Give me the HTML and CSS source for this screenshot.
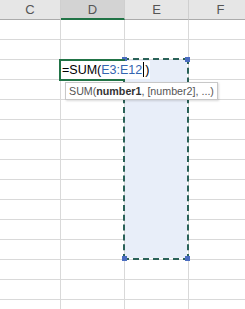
FILE: index.html
```html
<html>

<head>
    <link rel="stylesheet" href="styles.css">
</head>

<body>
<div class="sheet">
    <div class="head">C</div>
    <div class="head head-active">D</div>
    <div class="head">E</div>
    <div class="head">F</div>

    <div class="cell"></div><div class="cell"></div><div class="cell"></div><div class="cell"></div>
    <div class="cell"></div><div class="cell"></div><div class="cell"></div><div class="cell"></div>
    <div class="cell"></div><div class="cell"></div><div class="cell"></div><div class="cell"></div>
    <div class="cell"></div><div class="cell"></div><div class="cell"></div><div class="cell"></div>
    <div class="cell"></div><div class="cell"></div><div class="cell"></div><div class="cell"></div>
    <div class="cell"></div><div class="cell"></div><div class="cell"></div><div class="cell"></div>
    <div class="cell"></div><div class="cell"></div><div class="cell"></div><div class="cell"></div>
    <div class="cell"></div><div class="cell"></div><div class="cell"></div><div class="cell"></div>
    <div class="cell"></div><div class="cell"></div><div class="cell"></div><div class="cell"></div>
    <div class="cell"></div><div class="cell"></div><div class="cell"></div><div class="cell"></div>
    <div class="cell"></div><div class="cell"></div><div class="cell"></div><div class="cell"></div>
    <div class="cell"></div><div class="cell"></div><div class="cell"></div><div class="cell"></div>
    <div class="cell"></div><div class="cell"></div><div class="cell"></div><div class="cell"></div>
    <div class="cell"></div><div class="cell"></div><div class="cell"></div><div class="cell"></div>
    <div class="cell"></div><div class="cell"></div><div class="cell"></div><div class="cell"></div>

    <!-- referenced range E3:E12 -->
    <div class="range">
        <span class="handle h-tl"></span>
        <span class="handle h-tr"></span>
        <span class="handle h-bl"></span>
        <span class="handle h-br"></span>
    </div>

    <!-- active cell D3 being edited -->
    <div class="active">
        <span class="edit">=SUM(<span class="ref">E3:E12</span><span class="caret"></span>)</span>
    </div>

    <div class="tip">SUM(<b>number1</b>, [number2], ...)</div>
</div>
</body>

</html>
```

FILE: styles.css
```css
body {
    margin: 0;
    overflow: hidden;
    background: #fff;
    font-family: "Liberation Sans", Arial, sans-serif;
}

.sheet {
    position: relative;
    display: grid;
    grid-template-columns: 61px 64px 64px 64px;
    grid-auto-rows: 20px;
    width: 253px;
}

.head {
    box-sizing: border-box;
    background: #e6e6e6;
    border-right: 1px solid #cfcfcf;
    border-bottom: 1px solid #ababab;
    color: #555;
    font-size: 13px;
    text-align: center;
    line-height: 19px;
}

.head-active {
    background: #d3d3d3;
    border-bottom: 2px solid #217346;
}

.cell {
    box-sizing: border-box;
    border-right: 1px solid #d9d9d9;
    border-bottom: 1px solid #d9d9d9;
}

.range {
    position: absolute;
    left: 123px;
    top: 58px;
    width: 66px;
    height: 202px;
    box-sizing: border-box;
    border: 2px dashed #2a6158;
    background: #e8eef9;
    background-clip: padding-box;
}

.handle {
    position: absolute;
    width: 5px;
    height: 5px;
    background: #4a6cc0;
}

.h-tl { left: -3px; top: -3px; }
.h-tr { right: -3px; top: -3px; }
.h-bl { left: -3px; bottom: -3px; }
.h-br { right: -3px; bottom: -3px; }

.active {
    position: absolute;
    left: 59px;
    top: 59px;
    width: 66px;
    height: 22px;
    box-sizing: border-box;
    border: 2px solid #217346;
    white-space: nowrap;
}

.edit {
    display: inline-block;
    height: 18px;
    padding: 0 1px 0 1px;
    background: #fff;
    font-size: 12.5px;
    line-height: 18px;
    color: #000;
}

.ref {
    color: #3465b0;
}

.caret {
    display: inline-block;
    width: 1px;
    height: 15px;
    background: #000;
    vertical-align: -3px;
    margin: 0 1px;
}

.tip {
    position: absolute;
    left: 65px;
    top: 82px;
    height: 18px;
    box-sizing: border-box;
    padding: 0 3px;
    background: #fff;
    border: 1px solid #c8c8c8;
    box-shadow: 1px 1px 2px rgba(0, 0, 0, 0.15);
    color: #555;
    font-size: 10.7px;
    line-height: 16px;
    white-space: nowrap;
}

.tip b {
    color: #333;
}
```
